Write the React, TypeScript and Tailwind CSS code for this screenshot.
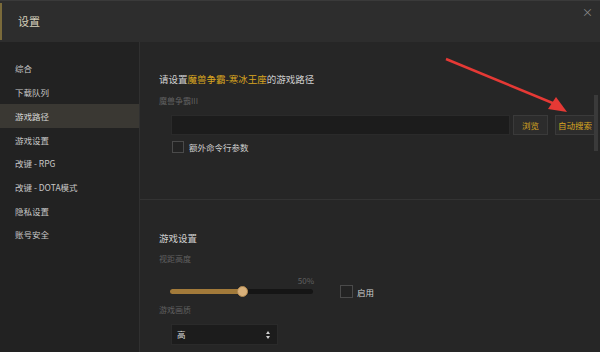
import React from 'react';

const font = { fontFamily: '"Noto Sans CJK SC", "Noto Sans", sans-serif' };

const menu = ['综合', '下载队列', '游戏路径', '游戏设置', '改键 - RPG', '改键 - DOTA模式', '隐私设置', '账号安全'];

export default function App() {
  return (
    <div className="relative w-[600px] h-[352px] overflow-hidden bg-[#262626] text-[#cfcfcf]" style={font}>
      {/* Title bar */}
      <div className="relative h-[42px] bg-[#2d2d2d] border-t border-[#3a3a3a] flex items-center">
        <div className="absolute left-0 top-[2px] bottom-[2px] w-[2px] bg-[#7a6a3a]" />
        <span className="ml-[18px] text-[11px] text-[#d6d0bc]">设置</span>
        <span className="absolute right-[7px] top-[6px] text-[11px] leading-none text-[#8a8a8a]">×</span>
      </div>

      <div className="flex h-[310px]">
        {/* Sidebar */}
        <div className="w-[140px] shrink-0 bg-[#222222] border-r border-[#303030] pt-[15px]">
          {menu.map((m) => (
            <div
              key={m}
              className={
                'h-[23.7px] flex items-center pl-[15px] text-[8.5px] ' +
                (m === '游戏路径' ? 'bg-[#3a3833] text-[#d8d8d8]' : 'text-[#c8c8c8]')
              }
            >
              {m}
            </div>
          ))}
        </div>

        {/* Content */}
        <div className="relative flex-1">
          <div className="h-[158px] border-b border-[#333333] pl-[19px] pt-[29px]">
            <div className="text-[9.5px] leading-[16px] text-[#cfcfcf]">
              请设置<span className="text-[#d9a520]">魔兽争霸-寒冰王座</span>的游戏路径
            </div>
            <div className="mt-[8px] text-[8px] leading-[12px] text-[#606060]">魔兽争霸III</div>
            <div className="mt-[8px] ml-[12px] flex items-center gap-[3px]">
              <div className="w-[339px] h-[20px] bg-[#1c1c1c] border border-[#2a2a2a]" />
              <div className="w-[35px] h-[20px] flex items-center justify-center bg-[#2c2c2c] border border-[#3a3a3a] text-[8.5px] text-[#d9a520]">
                浏览
              </div>
              <div className="ml-[4px] w-[40px] h-[20px] flex items-center justify-center bg-[#2c2c2c] border border-[#3a3a3a] text-[8.5px] text-[#d9a520]">
                自动搜索
              </div>
            </div>
            <div className="mt-[6px] ml-[13px] flex items-center gap-[5px] h-[12px]">
              <div className="w-[12px] h-[12px] border border-[#4a4a4a] bg-[#232323]" />
              <span className="text-[8.5px] leading-[12px] text-[#cfcfcf]">额外命令行参数</span>
            </div>
          </div>

          <div className="pl-[19px] pt-[30px]">
            <div className="text-[9.5px] leading-[16px] text-[#cfcfcf]">游戏设置</div>
            <div className="mt-[7px] text-[8px] leading-[12px] text-[#606060]">视距高度</div>
            <div className="mt-[10px] ml-[12px] w-[143px] text-right text-[8px] leading-[12px] text-[#606060]">50%</div>
            <div className="mt-[2px] ml-[11px] flex items-center h-[5px]">
              <div className="relative w-[143px] h-[5px] rounded-full bg-[#151515]">
                <div className="absolute left-0 top-0 h-[5px] w-[72px] rounded-full bg-[#a27a3a]" />
                <div className="absolute left-[67px] top-[-3px] w-[11px] h-[11px] rounded-full bg-[#d8b07a] border border-[#b08850]" />
              </div>
              <div className="ml-[27px] flex items-center gap-[4px]">
                <div className="w-[13px] h-[13px] border border-[#4a4a4a] bg-[#232323]" />
                <span className="text-[8.5px] leading-[12px] text-[#cfcfcf]">启用</span>
              </div>
            </div>
            <div className="mt-[10px] text-[8px] leading-[12px] text-[#606060]">游戏画质</div>
            <div className="mt-[8px] ml-[12px] w-[107px] h-[21px] bg-[#1c1c1c] border border-[#2a2a2a] flex items-center justify-between pl-[5px] pr-[6px]">
              <span className="text-[8.5px] text-[#d8d8d8]">高</span>
              <svg width="6" height="10" viewBox="0 0 6 10">
                <path d="M3 1 L5 4 H1 Z" fill="#cfcfcf" />
                <path d="M3 9 L5 6 H1 Z" fill="#cfcfcf" />
              </svg>
            </div>
          </div>

          {/* Scrollbar */}
          <div className="absolute right-[2px] top-[53px] w-[4px] h-[56px] bg-[#3a3a3a]" />
        </div>
      </div>

      {/* Annotation arrow */}
      <svg className="absolute left-0 top-0 pointer-events-none" width="600" height="352">
        <line x1="446" y1="59" x2="555" y2="104" stroke="#e53935" strokeWidth="2.5" />
        <path d="M567 112 L548 109 L556 97 Z" fill="#e53935" />
      </svg>
    </div>
  );
}
